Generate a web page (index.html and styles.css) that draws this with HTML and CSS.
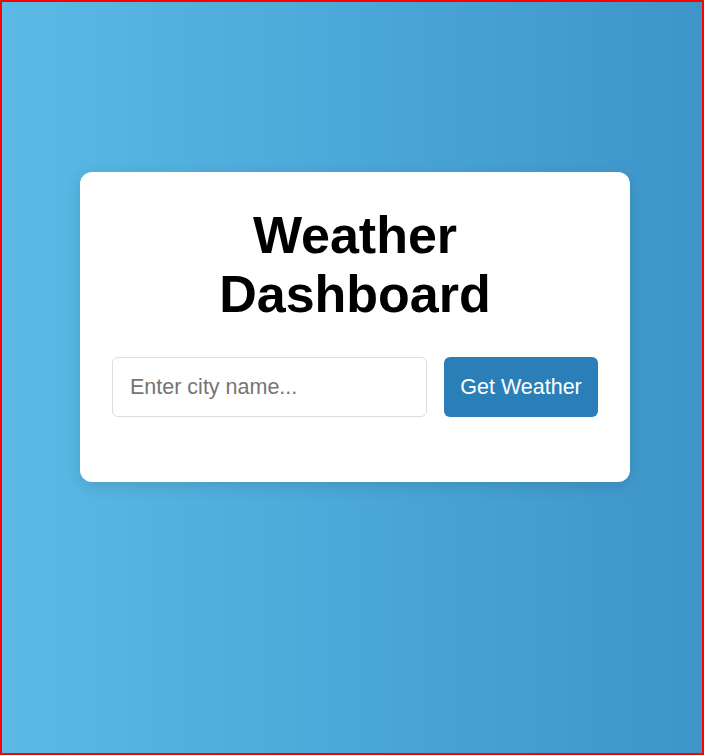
FILE: index.html
```html
<!DOCTYPE html>
<html lang="en">
<head>
<meta charset="utf-8">
<title>Weather Dashboard</title>
<link rel="stylesheet" href="styles.css">
</head>
<body>
<main class="page">
  <section class="card">
    <h1 class="title">Weather Dashboard</h1>
    <form class="search" onsubmit="return false;">
      <input class="city-input" type="text" placeholder="Enter city name...">
      <button class="search-btn" type="submit">Get Weather</button>
    </form>
  </section>
</main>
</body>
</html>
```
FILE: styles.css
```css
* { box-sizing: border-box; }

html, body { height: 100%; }

body {
  margin: 0;
  border: 2px solid #ff0000;
  background: linear-gradient(to right, #5abae5, #3d95ca);
  font-family: "Liberation Sans", Arial, sans-serif;
}

.page {
  display: flex;
  justify-content: center;
  padding: 170px 0 0 6px;
}

.card {
  width: 550px;
  background: #ffffff;
  border-radius: 12px;
  box-shadow: 0 4px 16px rgba(0, 0, 0, 0.12);
  padding: 34px 32px 65px;
}

.title {
  margin: 0 auto 33px;
  max-width: 475px;
  text-align: center;
  font-size: 52px;
  line-height: 59px;
  font-weight: bold;
  color: #000;
}

.search {
  display: flex;
  gap: 17px;
}

.city-input {
  flex: 1;
  min-width: 0;
  height: 60px;
  padding: 0 17px;
  border: 1px solid #dddddd;
  border-radius: 6px;
  font-family: inherit;
  font-size: 21.5px;
  color: #333;
  background: #fff;
  outline: none;
}

.city-input::placeholder { color: #757575; }

.search-btn {
  width: 154px;
  height: 60px;
  border: none;
  border-radius: 6px;
  background: #2a7fb8;
  color: #ffffff;
  font-family: inherit;
  font-size: 21.5px;
  padding: 0;
  cursor: pointer;
}
```
